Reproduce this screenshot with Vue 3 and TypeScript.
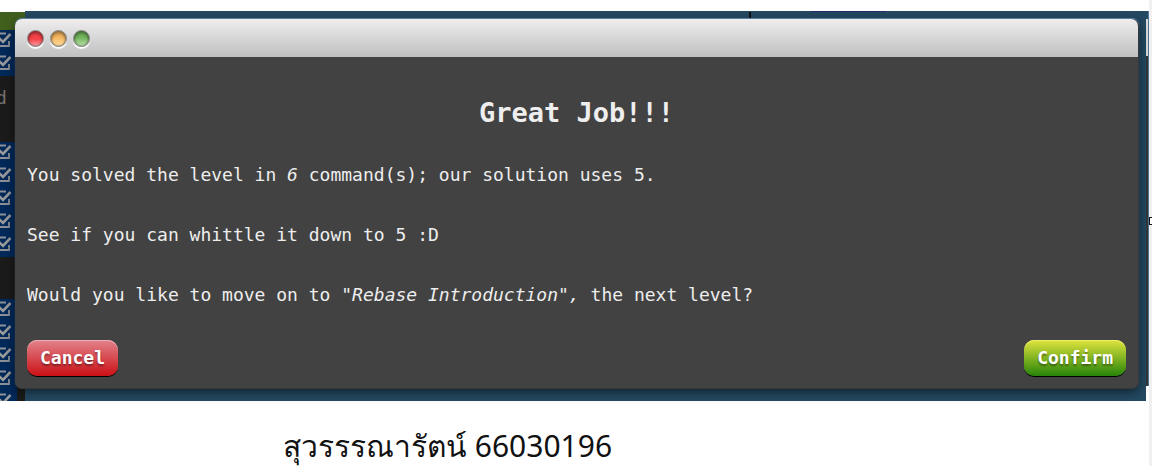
<script setup lang="ts">
interface SidebarBlock {
  kind: 'green' | 'blue' | 'dark'
  rows: number
  label?: string
}

const blocks: SidebarBlock[] = [
  { kind: 'green', rows: 0 },
  { kind: 'blue', rows: 2 },
  { kind: 'dark', rows: 0, label: 'd' },
  { kind: 'blue', rows: 5 },
  { kind: 'dark', rows: 0 },
  { kind: 'blue', rows: 5 },
]

const lights = [
  { name: 'Close', tone: 'red' },
  { name: 'Minimize', tone: 'amber' },
  { name: 'Zoom', tone: 'lime' },
]
</script>

<template>
  <main class="page">
    <section class="stage">
      <div class="backdrop" aria-hidden="true">
        <div class="sidebar">
          <div v-for="(block, i) in blocks" :key="i" class="block" :class="block.kind">
            <span v-if="block.label" class="clipped">{{ block.label }}</span>
            <div v-for="n in block.rows" :key="n" class="tick">
              <svg width="12" height="16" viewBox="0 0 12 16">
                <path d="M0 1.5H6M9 9V14H0" fill="none" stroke="#8d9298" stroke-width="1.8" />
                <path d="M-1 6L3 10L10.5 2" fill="none" stroke="#999b9d" stroke-width="2.6" />
              </svg>
            </div>
          </div>
        </div>
        <div class="canvas">
          <span class="mark"></span>
          <span class="mark line"></span>
        </div>
        <div class="edge"></div>
      </div>

      <div class="window" role="dialog" aria-labelledby="dialog-title">
        <header class="titlebar">
          <button v-for="light in lights" :key="light.tone" type="button" class="light" :class="light.tone" :aria-label="light.name"></button>
        </header>
        <div class="content">
          <h2 id="dialog-title">Great Job!!!</h2>
          <p>You solved the level in <em>6</em> command(s); our solution uses 5.</p>
          <p>See if you can whittle it down to 5 :D</p>
          <p>Would you like to move on to <em>"Rebase Introduction",</em> the next level?</p>
          <div class="actions">
            <button type="button" class="action cancel">Cancel</button>
            <button type="button" class="action confirm">Confirm</button>
          </div>
        </div>
      </div>
    </section>
    <p class="caption">สุวรรรณารัตน์ 66030196</p>
    <div class="gutter" aria-hidden="true"><span class="handle"></span></div>
  </main>
</template>

<style>
html,
body {
  background: #fff;
  overflow: hidden;
}
</style>

<style scoped>
.page {
  position: relative;
  min-height: 100vh;
  box-sizing: border-box;
  padding-top: 11px;
  background: #fff;
}
.stage {
  position: relative;
  padding: 8px 13px 12px 15px;
}
.backdrop {
  position: absolute;
  inset: 0 3px 0 0;
  display: flex;
}
.sidebar {
  width: 25px;
  background: #1b1b1b;
  overflow: hidden;
}
.block {
  box-sizing: border-box;
}
.block.green {
  height: 19px;
  background: #42601d;
  border-top: 1px solid #fff;
}
.block.blue {
  width: 17px;
  background: #00295a;
}
.block.dark {
  height: 66px;
  padding-top: 8px;
}
.block.dark:nth-child(5) {
  height: 42px;
}
.clipped {
  display: block;
  margin-left: -4px;
  font: 18px/28px "DejaVu Sans Mono", monospace;
  color: #77736f;
}
.tick {
  height: 23px;
  box-sizing: border-box;
  padding-top: 2px;
}
.tick svg {
  display: block;
}
.canvas {
  flex: 1;
  display: flex;
  gap: 60px;
  padding-left: 63%;
  background: #244a63;
}
.mark {
  width: 2px;
  height: 7px;
  margin-top: 1px;
  background: #111;
}
.mark.line {
  width: 75px;
  height: 1px;
  margin-top: 0;
  background: #252c6b;
}
.edge {
  width: 2px;
  height: 375px;
  border-right: 1px solid #4f7796;
  background: linear-gradient(#244a63 0 8px, #ddd 8px 45px, #343638 45px);
}
.window {
  position: relative;
  border-radius: 7px;
  background: #424242;
  border: 1px solid #383838;
  border-top: 0;
  border-left: 0;
  box-shadow: 0 -1px 1px #5b86a8, 0 3px 12px rgba(0, 0, 0, 0.55);
  font-family: "DejaVu Sans Mono", monospace;
  color: #eee;
}
.titlebar {
  display: flex;
  align-items: center;
  gap: 6px;
  height: 38px;
  padding-left: 12px;
  border-radius: 7px 7px 0 0;
  background: linear-gradient(#efeded, #c0c0c0);
}
.light {
  width: 17px;
  height: 17px;
  padding: 0;
  border: 1px solid #858585;
  border-radius: 50%;
  box-shadow: inset 0 3px 3px rgba(0, 0, 0, 0.3), inset 0 0 2px rgba(0, 0, 0, 0.6), 0 2px 1px #fff;
}
.red {
  background: linear-gradient(#f54349 55%, #ffa3a3);
}
.amber {
  background: linear-gradient(#f5b861 45%, #ffdfa2);
}
.lime {
  background: linear-gradient(#73b65d 45%, #bbe2a9);
}
.content {
  padding: 36px 12px 12px;
}
h2 {
  margin: 0 0 27px;
  font-size: 27px;
  line-height: 40px;
  text-align: center;
}
.content p {
  margin: 0 0 30px;
  font-size: 18px;
  line-height: 30px;
}
.actions {
  display: flex;
  justify-content: space-between;
}
.action {
  height: 36px;
  padding: 0 13px;
  border: 0;
  border-radius: 10px;
  font: bold 18px/36px "DejaVu Sans Mono", monospace;
  color: #fff;
  text-shadow: 0 2px 2px rgba(0, 0, 0, 0.4);
}
.cancel {
  background: linear-gradient(#e2838b, #cb1015);
  box-shadow: inset 0 1px #eeb0b5, 0 1px #000;
}
.confirm {
  background: linear-gradient(#dfe43d, #278409);
  box-shadow: inset 0 1px #eef06d, 0 1px #000;
}
.caption {
  margin: 24px 0 0 283px;
  font: 30px/41px "Noto Sans", "Open Sans", sans-serif;
  color: #111;
}
.gutter {
  position: absolute;
  inset: 0 0 0 auto;
  width: 3px;
  background: #f0f0f0;
}
.handle {
  position: absolute;
  top: 217px;
  left: 0;
  width: 5px;
  height: 6px;
  border: 1px solid #111;
  background: #fff;
}
</style>
